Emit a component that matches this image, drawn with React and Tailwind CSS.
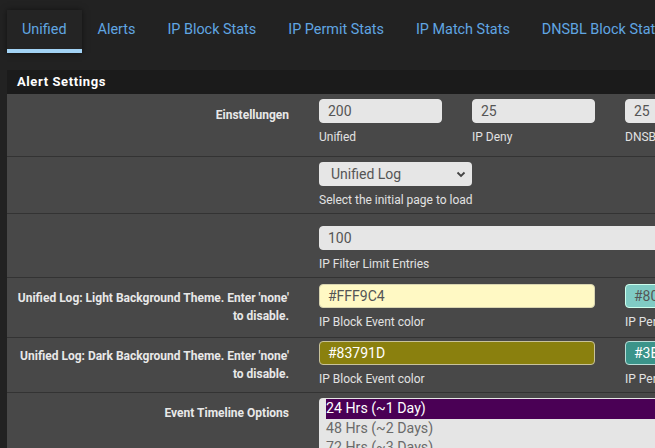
const TABS = ['Unified', 'Alerts', 'IP Block Stats', 'IP Permit Stats', 'IP Match Stats', 'DNSBL Block Stats', 'DNSBL Stats'];

function Field({ value, w, bg = 'bg-[#e6e6e6]', text = 'text-[#555]', border = 'border-[#e6e6e6]' }) {
  return (
    <div className={`${w} h-[24px] rounded-[4px] border ${border} ${bg} ${text} px-[8px] flex items-center text-[14px] leading-none shrink-0`}>
      {value}
    </div>
  );
}

function Help({ children }) {
  return <div className="text-[12px] text-[#e2e2e2] leading-none mt-[8px]">{children}</div>;
}

function Row({ label, children, className = '' }) {
  return (
    <div className={`flex border-b border-[#333] ${className}`}>
      <div className="w-[297px] shrink-0 pr-[15px] text-right text-[12px] font-bold text-[#e8e8e8] leading-[18px]">
        {label}
      </div>
      <div className="pl-[15px] flex-1">{children}</div>
    </div>
  );
}

export default function App() {
  return (
    <div className="w-[655px] h-[448px] overflow-hidden bg-[#222] font-['Roboto',sans-serif]">
      <div className="w-[1000px]">
        {/* Tabs */}
        <div className="flex pl-[7px] pt-[10px] h-[54px]">
          {TABS.map((t, i) => (
            <div
              key={t}
              className={`h-[43px] pt-[9px] text-[14.4px] text-[#60a6e2] whitespace-nowrap ${
                i === 0
                  ? 'px-[15px] bg-[#242424] border-b-[4px] border-[#a3d3f5] shadow-[0_0_6px_rgba(0,0,0,0.5)]'
                  : 'px-[16px]'
              }`}
            >
              {t}
            </div>
          ))}
        </div>

        <div className="ml-[7px] mt-[16px]">
          <div className="h-[24px] bg-[#1b1b1b] pl-[10px] flex items-center text-[13px] font-bold text-white tracking-[0.6px]">
            Alert Settings
          </div>

          <div className="bg-[#484848]">
            <Row label={<div className="pt-[12px]">Einstellungen</div>} className="h-[63px]">
              <div className="flex gap-[30px] pt-[5px]">
                {[['200', 'Unified'], ['25', 'IP Deny'], ['25', 'DNSBL']].map(([v, l]) => (
                  <div key={l}>
                    <Field value={v} w="w-[123px]" />
                    <Help>{l}</Help>
                  </div>
                ))}
              </div>
            </Row>

            <Row label="" className="h-[57px]">
              <div className="pt-[5px]">
                <div className="w-[153px] h-[24px] rounded-[4px] bg-[#e6e6e6] text-[#555] text-[14px] flex items-center justify-between pl-[12px] pr-[6px]">
                  <span>Unified Log</span>
                  <svg width="10" height="10" viewBox="0 0 10 10">
                    <path d="M1.5 3.5 L5 7 L8.5 3.5" fill="none" stroke="#444" strokeWidth="1.8" />
                  </svg>
                </div>
                <Help>Select the initial page to load</Help>
              </div>
            </Row>

            <Row label="" className="h-[64px]">
              <div className="pt-[12px]">
                <Field value="100" w="w-[600px]" />
                <Help>IP Filter Limit Entries</Help>
              </div>
            </Row>

            <Row
              label={<div className="pt-[11px]">Unified Log: Light Background Theme. Enter 'none'<br />to disable.</div>}
              className="h-[60px]"
            >
              <div className="flex gap-[30px] pt-[6px]">
                <div>
                  <Field value="#FFF9C4" w="w-[276px]" bg="bg-[#fff9c4]" border="border-[#d8d4b0]" />
                  <Help>IP Block Event color</Help>
                </div>
                <div>
                  <Field value="#80CBC4" w="w-[276px]" bg="bg-[#80cbc4]" border="border-[#cfe]" />
                  <Help>IP Permit Event color</Help>
                </div>
              </div>
            </Row>

            <Row
              label={<div className="pt-[9px]">Unified Log: Dark Background Theme. Enter 'none'<br />to disable.</div>}
              className="h-[55px]"
            >
              <div className="flex gap-[30px] pt-[3px]">
                <div>
                  <Field value="#83791D" w="w-[276px]" bg="bg-[#8a800e]" text="text-white" border="border-[#c8c29a]" />
                  <Help>IP Block Event color</Help>
                </div>
                <div>
                  <Field value="#3B9B8F" w="w-[276px]" bg="bg-[#3b948a]" text="text-white" border="border-[#b9ddd8]" />
                  <Help>IP Permit Event color</Help>
                </div>
              </div>
            </Row>

            <Row label={<div className="pt-[11px]">Event Timeline Options</div>} className="h-[80px] border-b-0">
              <div className="pt-[5px]">
                <div className="w-[600px] h-[80px] rounded-[4px] bg-[#e5e5e5] pl-[7px] pt-[1px] text-[14.2px] leading-[19.5px] text-[#6a6a6a]">
                  <div className="bg-[#4a0055] text-white">24 Hrs (~1 Day)</div>
                  <div>48 Hrs (~2 Days)</div>
                  <div>72 Hrs (~3 Days)</div>
                </div>
              </div>
            </Row>
          </div>
        </div>
      </div>
    </div>
  );
}
